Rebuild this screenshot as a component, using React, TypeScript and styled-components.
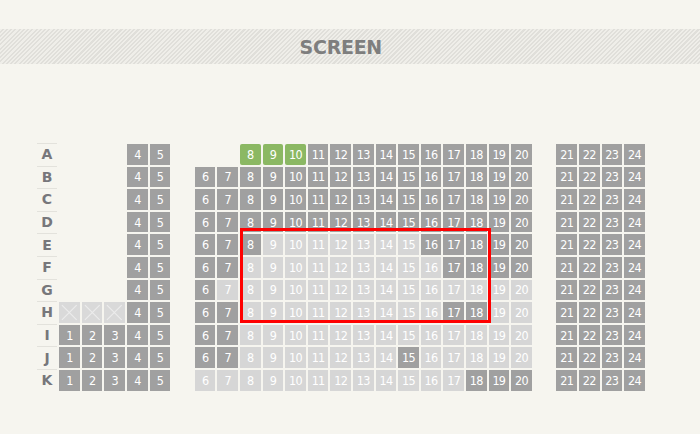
import React from "react";
import styled, { createGlobalStyle, css } from "styled-components";

const GlobalStyle = createGlobalStyle`
  html, body { margin: 0; padding: 0; background: #f6f5ef; }
  body { font-family: "DejaVu Sans", sans-serif; }
`;

type Status = "d" | "l" | "g" | "x";

const SEAT = 20.6;
const GAP = 2;
const PITCH = SEAT + GAP;

const Page = styled.div`
  min-height: 434px;
  padding-top: 29px;
  box-sizing: border-box;
  background: #f6f5ef;
`;

const ScreenBand = styled.div`
  height: 35px;
  background: repeating-linear-gradient(
    135deg,
    #efeee9 0 1.5px,
    #e0dfda 1.5px 3px
  );
`;

const ScreenInner = styled.div`
  margin-left: 36.7px;
  width: ${27 * SEAT + 26 * GAP}px;
  height: 100%;
  display: flex;
  align-items: center;
  justify-content: center;
`;

const ScreenLabel = styled.span`
  font-family: "DejaVu Sans", sans-serif;
  font-weight: bold;
  font-size: 19px;
  color: #7e7e7e;
  letter-spacing: -0.3px;
`;

const SeatMap = styled.div`
  position: relative;
  margin: 80px 0 0 36.7px;
  display: grid;
  grid-template-columns: repeat(27, ${SEAT}px);
  grid-auto-rows: ${SEAT}px;
  gap: ${GAP}px;
  width: max-content;
`;

const RowLabel = styled.div`
  display: flex;
  align-items: center;
  justify-content: center;
  font-family: "DejaVu Sans", sans-serif;
  font-weight: bold;
  font-size: 14px;
  color: #77777b;
  box-shadow: 0 -1px 0 #e3e2dc;
`;

const seatColors: Record<Status, string> = {
  d: "#a0a0a0",
  l: "#d6d6d6",
  g: "#8bb863",
  x: "#d9d9d9",
};

const Seat = styled.div<{ $status: Status }>`
  display: flex;
  align-items: center;
  justify-content: center;
  background: ${(p) => seatColors[p.$status]};
  color: #ffffff;
  font-family: "DejaVu Sans Condensed", "DejaVu Sans", sans-serif;
  font-size: 12.5px;
  letter-spacing: -0.7px;
  ${(p) =>
    p.$status === "g" &&
    css`
      border-radius: 2px;
    `}
`;

const Selection = styled.div`
  position: absolute;
  left: ${9 * PITCH + 0.3}px;
  top: 84px;
  width: 250.5px;
  height: 94.5px;
  box-sizing: border-box;
  border: 3.3px solid #ff0000;
  pointer-events: none;
`;

const BlockedMark = () => (
  <svg width="21" height="21" viewBox="0 0 21 21">
    <path d="M3 3 L18 18 M18 3 L3 18" stroke="#ececec" strokeWidth="1.1" fill="none" />
  </svg>
);

const rowSpec: Record<string, [number, number, Status][]> = {
  A: [[4, 5, "d"], [8, 10, "g"], [11, 24, "d"]],
  B: [[4, 24, "d"]],
  C: [[4, 24, "d"]],
  D: [[4, 24, "d"]],
  E: [[4, 8, "d"], [9, 15, "l"], [16, 24, "d"]],
  F: [[4, 7, "d"], [8, 16, "l"], [17, 24, "d"]],
  G: [[4, 6, "d"], [7, 20, "l"], [21, 24, "d"]],
  H: [[1, 3, "x"], [4, 7, "d"], [8, 16, "l"], [17, 18, "d"], [19, 20, "l"], [21, 24, "d"]],
  I: [[1, 7, "d"], [8, 20, "l"], [21, 24, "d"]],
  J: [[1, 7, "d"], [8, 14, "l"], [15, 15, "d"], [16, 20, "l"], [21, 24, "d"]],
  K: [[1, 5, "d"], [6, 17, "l"], [18, 24, "d"]],
};

const gridCol = (c: number) => (c <= 5 ? c + 1 : c <= 20 ? c + 2 : c + 3);

export default function App() {
  const rows = Object.keys(rowSpec);
  return (
    <>
      <GlobalStyle />
      <Page>
        <ScreenBand>
          <ScreenInner>
            <ScreenLabel>SCREEN</ScreenLabel>
          </ScreenInner>
        </ScreenBand>
        <SeatMap>
          {rows.map((r, ri) => {
            const cells: React.ReactNode[] = [
              <RowLabel key={r} style={{ gridRow: ri + 1, gridColumn: 1 }}>
                {r}
              </RowLabel>,
            ];
            rowSpec[r].forEach(([from, to, st]) => {
              for (let c = from; c <= to; c++) {
                cells.push(
                  <Seat
                    key={`${r}${c}`}
                    $status={st}
                    style={{ gridRow: ri + 1, gridColumn: gridCol(c) }}
                  >
                    {st === "x" ? <BlockedMark /> : c}
                  </Seat>
                );
              }
            });
            return cells;
          })}
          <Selection />
        </SeatMap>
      </Page>
    </>
  );
}
